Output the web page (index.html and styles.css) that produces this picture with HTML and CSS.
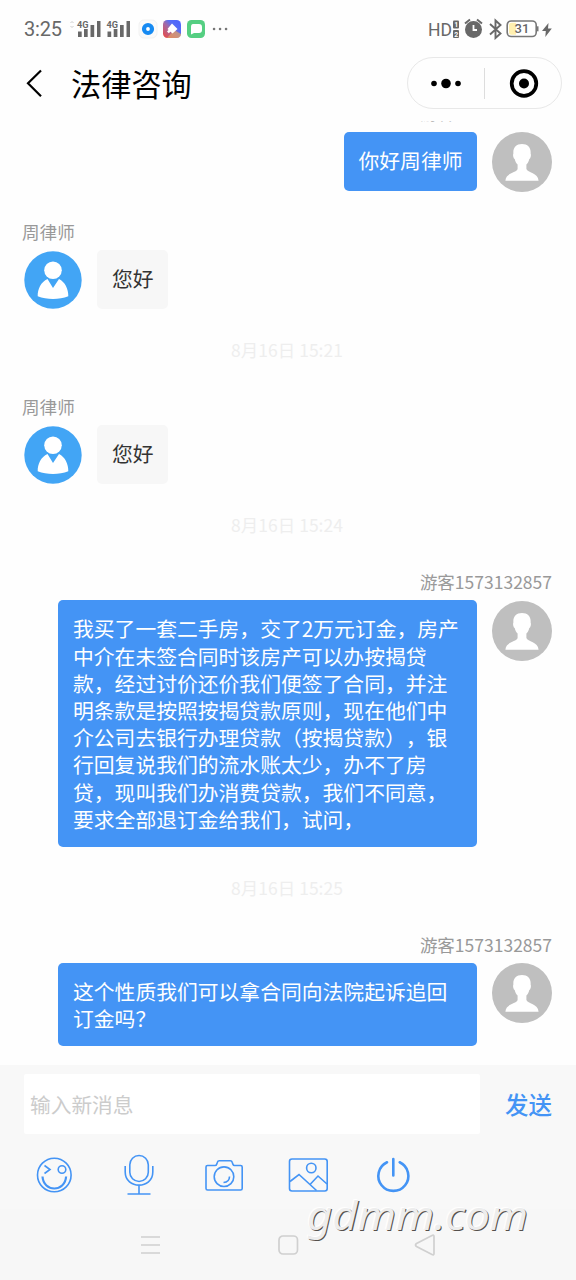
FILE: index.html
```html
<!DOCTYPE html>
<html lang="zh-CN">
<head>
<meta charset="utf-8">
<title>法律咨询</title>
<link rel="stylesheet" href="styles.css">
</head>
<body>
<svg class="defs" width="0" height="0">
  <symbol id="guest" viewBox="0 0 60 60">
    <circle cx="30" cy="30" r="30" fill="#bfbfbf"/>
    <path fill="#fff" d="M30 12C24 12 20.800 16 21.400 21.500C20.800 22 21 26 22.700 27C23.300 29.500 24.200 31.300 25.600 32.500V37C24.500 41 13.800 40.500 13.400 48.700H46.600C46.200 40.500 35.500 41 34.400 37V32.500C35.800 31.300 36.700 29.500 37.300 27C39 26 39.200 22 38.600 21.500C39.200 16 36 12 30 12Z"/>
  </symbol>
  <symbol id="lawyer" viewBox="0 0 58 58">
    <circle cx="29" cy="29" r="28.700" fill="#42a5f5"/>
    <circle cx="29" cy="19.300" r="8.800" fill="#fff"/>
    <path fill="#fff" d="M23.500 28 29 37l6-9C41 31 44.500 38 44.300 45.200c-9.300 3.600-21.300 3.600-30.600 0C13.500 38 17 31 23.500 28z"/>
  </symbol>
</svg>
<div class="phone">
  <header>
    <div class="status">
      <span class="clock">3:25</span>
      <svg class="signals" width="170" height="24" viewBox="0 0 170 24">
        <path d="M.500 7l1.500-1.500L3.500 7M.5 10l1.500 1.500L3.500 10" fill="none" stroke="#ccc"/>
        <g fill="#686868">
          <text class="net" x="7" y="11.500" textLength="11.500" lengthAdjust="spacingAndGlyphs">4G</text><text class="net" x="36.500" y="11.500" textLength="11.500" lengthAdjust="spacingAndGlyphs">4G</text>
          <path d="M8 15.500h3.700v5.500H8zM14 13h3.700v8H14zM20.500 9h3.700v12h-3.700zM27 5h3.500v16H27zM37.500 15.500h3.700v5.500h-3.700zM43.700 13h3.700v8h-3.700zM50 9h3.700v12H50zM56.500 5H60v16h-3.500z"/>
        </g>
        <rect x="69" y="4" width="18" height="18" rx="5" fill="#fafafa" stroke="#f2f2f2"/>
        <circle cx="78" cy="13" r="4" fill="#fff" stroke="#168af2" stroke-width="4.200"/>
        <defs><linearGradient id="g" x1="0" y1="1" x2="1" y2="0"><stop offset="0" stop-color="#f0483e"/><stop offset=".45" stop-color="#a36aa5"/><stop offset=".65" stop-color="#566ef5"/><stop offset="1" stop-color="#4b63ff"/></linearGradient></defs>
        <rect x="93" y="4" width="18" height="18" rx="4.500" fill="url(#g)"/>
        <path d="M97 22l7-8 7 4q0 4-4.500 4z" fill="#e9ad62" opacity=".6"/>
        <path d="M102 7.500l5.500 5.500-5 4.500-5-4.500z M97 15.500l2-2 1.800 1.800-2 2z" fill="#fff"/>
        <rect x="117" y="4" width="18" height="18" rx="4.500" fill="#55cf82"/>
        <path d="M123 8h6q3 0 3 3v3q0 3-3 3h-5l-3 1.500V11q0-3 2-3z" fill="#fff"/>
        <path d="M144 13h.1M150 13h.1M156 13h.1" stroke="#777" stroke-width="2.500" stroke-linecap="round"/>
      </svg>
      <svg class="system" width="128" height="24" viewBox="0 0 128 24">
        <g fill="#686868">
          <text class="hd" x="1" y="20" textLength="24" lengthAdjust="spacingAndGlyphs">HD</text>
          <rect x="26" y="4.500" width="6" height="8" rx="1"/><rect x="26" y="14" width="6" height="8" rx="1"/>
          <text class="sim" x="27.200" y="11.300">1</text><text class="sim" x="27.200" y="20.700">2</text>
          <circle cx="46.500" cy="13.500" r="8.500"/>
        </g>
        <path d="M46.500 9v5h3.500" fill="none" stroke="#fff" stroke-width="1.800"/>
        <path d="M38 7.500l5-4M55 7.500l-5-4" stroke="#686868" stroke-width="2"/>
        <path d="M63 8l10.500 9.500-5 4.500V4.500l5 4.500L63 18.500" fill="none" stroke="#686868" stroke-width="1.900"/>
        <rect x="80.200" y="5" width="29" height="15.500" rx="4" fill="#fff" stroke="#777" stroke-width="1.600"/>
        <path d="M84.500 6.800H89v12h-4.500q-2.500 0-2.500-2.500v-7q0-2.500 2.500-2.500z" fill="#fff0b0"/>
        <path d="M110.500 10.300v5" stroke="#777" stroke-width="2"/>
        <text class="charge" x="87.500" y="17.300">31</text>
        <path d="M121.500 7l-6.500 8h3.800l-.5 6 6.500-8.500H121z" fill="#686868"/>
      </svg>
    </div>
    <div class="nav">
      <svg width="20" height="32" viewBox="0 0 20 32"><path d="M19 3.500 6 16.200l13 13" fill="none" stroke="#000" stroke-width="2.200"/></svg>
      <h1>法律咨询</h1>
      <div class="capsule">
        <svg width="76" height="50" viewBox="0 0 76 50"><circle cx="26" cy="25.500" r="2.800"/><circle cx="38" cy="25.500" r="4.800"/><circle cx="50" cy="25.500" r="2.800"/></svg>
        <i></i>
        <svg width="76" height="50" viewBox="0 0 76 50"><circle cx="39" cy="25.500" r="12.300" fill="none" stroke="#000" stroke-width="3.700"/><circle cx="39" cy="25.500" r="5"/></svg>
      </div>
    </div>
  </header>

  <main>
    <section class="msg mine">
      <div class="name">游客1573132857</div>
      <div class="row"><div class="bubble">你好周律师</div><svg class="avatar"><use href="#guest"/></svg></div>
    </section>
    <section class="msg theirs">
      <div class="name">周律师</div>
      <div class="row"><svg class="avatar"><use href="#lawyer"/></svg><div class="bubble">您好</div></div>
    </section>
    <time>8月16日 15:21</time>
    <section class="msg theirs">
      <div class="name">周律师</div>
      <div class="row"><svg class="avatar"><use href="#lawyer"/></svg><div class="bubble">您好</div></div>
    </section>
    <time>8月16日 15:24</time>
    <section class="msg mine">
      <div class="name">游客1573132857</div>
      <div class="row"><div class="bubble wide">我买了一套二手房，交了2万元订金，房产<br>中介在未签合同时该房产可以办按揭贷<br>款，经过讨价还价我们便签了合同，并注<br>明条款是按照按揭贷款原则，现在他们中<br>介公司去银行办理贷款（按揭贷款），银<br>行回复说我们的流水账太少，办不了房<br>贷，现叫我们办消费贷款，我们不同意，<br>要求全部退订金给我们，试问，</div><svg class="avatar"><use href="#guest"/></svg></div>
    </section>
    <time>8月16日 15:25</time>
    <section class="msg mine">
      <div class="name">游客1573132857</div>
      <div class="row"><div class="bubble wide">这个性质我们可以拿合同向法院起诉追回<br>订金吗？</div><svg class="avatar"><use href="#guest"/></svg></div>
    </section>
  </main>

  <footer>
    <div class="compose"><div class="input">输入新消息</div><div class="send">发送</div></div>
    <div class="tools">
      <svg width="40" height="44" viewBox="0 0 40 44"><circle cx="20.300" cy="22" r="16.800"/><circle cx="28" cy="16.500" r="3.800"/><path d="M10.500 12.500l5.500 4-5.500 4"/><path d="M8.500 23.500c1 16 22.600 16 23.600 0" stroke-width="2.200"/></svg>
      <svg width="40" height="44" viewBox="0 0 40 44"><rect x="10.800" y="2.500" width="18.500" height="26" rx="9.250"/><path d="M6.200 13v6c0 17.500 27.600 17.500 27.600 0v-6M20 32v8.800M8.500 41h23"/></svg>
      <svg width="40" height="44" viewBox="0 0 40 44"><path d="M3.500 12.500h7.500q1.300 0 1.700-1.300l.6-1.800q.5-1.700 2-1.700h11q1.500 0 2 1.700l.6 1.800q.4 1.300 1.700 1.300h6q1.600 0 1.600 1.600v21.300q0 1.600-1.600 1.600h-33q-1.600 0-1.600-1.600V14.100q0-1.600 1.500-1.600z"/><circle cx="20" cy="23.700" r="9.800"/><path d="M25.500 23.500q0 5.500-6 6"/></svg>
      <svg width="40" height="44" viewBox="0 0 40 44"><rect x="1.500" y="6" width="37.700" height="32" rx="2.500"/><circle cx="23.300" cy="15" r="4.700"/><path d="M2 28.500 11 21.500 28.500 37.500M22.500 31l7.500-8 9 8"/></svg>
      <svg width="40" height="44" viewBox="0 0 40 44"><path d="M14 9.300a15 15 0 1 0 12.700 0M20.300 6v16.500" stroke-width="2.600" stroke-linecap="round"/></svg>
    </div>
    <div class="system-nav">
      <svg width="22" height="22" viewBox="0 0 22 22"><path d="M1 3h19M1 11h19M1 19h19"/></svg>
      <svg width="22" height="22" viewBox="0 0 22 22"><rect x="2" y="2" width="18.500" height="18" rx="4"/></svg>
      <svg width="22" height="22" viewBox="0 0 22 22"><path d="M2.500 9.500 18 1.500q2-1 2 1v17q0 2-2 1L2.500 12.500q-2-1.500 0-3z"/></svg>
    </div>
    <svg class="watermark" width="240" height="60" viewBox="0 0 240 60"><text x="11" y="40" textLength="221" lengthAdjust="spacingAndGlyphs">gdmm.com</text></svg>
  </footer>
</div>
</body>
</html>
```
FILE: styles.css
```css
* { box-sizing: border-box; }
body { margin: 0; background: #fff; font-family: "Noto Sans CJK SC", sans-serif; text-spacing-trim: space-all; }
.defs { position: absolute; }
.phone { width: 576px; height: 1280px; display: flex; flex-direction: column; background: #fefefe; }
svg { display: block; flex: none; }

header { height: 121px; flex: none; }
.status { height: 48px; padding: 16px 0 0 24px; display: flex; font-family: Roboto, sans-serif; color: #686868; }
.clock { width: 46px; font-size: 20px; line-height: 27px; letter-spacing: -0.2px; }
.system { margin-left: 187px; }
.net { font: bold 9px Roboto, sans-serif; }
.hd { font: 19px Roboto, sans-serif; }
.sim { font: bold 7px Roboto, sans-serif; fill: #fff; }
.charge { font: 500 13px Roboto, sans-serif; fill: #666; }
.nav { height: 70px; padding: 0 14px 0 22px; display: flex; align-items: center; }
.nav h1 { margin: 0 0 0 29px; font-size: 30.2px; line-height: 44px; font-weight: 400; color: #000; }
.capsule { width: 155px; height: 52px; margin-left: auto; display: flex; align-items: center; border: 1px solid #e8e8e8; border-radius: 26px; }
.capsule i { width: 1px; height: 31px; background: #ddd; }

main { height: 944px; flex: none; overflow: hidden; padding: 0 24px 0 22px; display: flex; flex-direction: column; }
.msg { flex: none; }
.msg:first-child { margin-top: -20px; }
.msg:first-child .name { margin-top: -1px; margin-bottom: 1px; color: #bbb; }
.msg.theirs:nth-child(2) { margin-top: 27px; }
.name { height: 31px; font-size: 17.6px; line-height: 26px; color: #999; }
.row { display: flex; align-items: flex-start; }
.mine .row { justify-content: flex-end; gap: 15px; }
.mine .name { text-align: right; font-size: 17.5px; }
.mine .avatar { width: 60px; height: 60px; margin: .4px .5px 0 -.5px; }
.theirs .avatar { width: 58px; height: 58px; margin: .9px 0 0 2px; }
.theirs .row { gap: 15px; height: 59px; }
.bubble { padding: 14.500px 14.500px 14px 15px; min-height: 59px; border-radius: 5px; font-size: 20.8px; line-height: 27.2px; white-space: nowrap; background: #4494f5; color: #fff; }
.bubble.wide { width: 419px; padding-top: 15px; padding-bottom: 13.600px; }
.theirs .bubble { background: #f7f7f7; color: #333; }
time { flex: none; margin: 28px 0 31px; font-size: 17.5px; line-height: 26px; text-align: center; color: #eee; }

footer { position: relative; height: 215px; flex: none; background: #f8f8f8; }
.compose { display: flex; padding: 9px 24px 0; }
.input { width: 456px; height: 60px; padding-left: 6px; background: #fff; border-radius: 2px; font-size: 20.7px; line-height: 60px; color: #ccc; }
.send { margin-left: auto; font-size: 23.500px; line-height: 60px; font-weight: 500; color: #4494f5; }
.tools { display: flex; gap: 44.800px; padding: 19px 0 0 34px; height: 75px; }
.tools svg { fill: none; stroke: #4494f5; stroke-width: 1.6; }
.system-nav { height: 71px; padding: 25px 0 0 140px; display: flex; gap: 115px; background: #f7f7f7; }
.system-nav svg { fill: none; stroke: #d0d0d0; stroke-width: 1.7; }
.watermark { position: absolute; left: 296px; top: 125px; overflow: visible; }
.watermark text { font: italic 40px "Noto Sans", sans-serif; fill: #ededed; text-shadow: 1px 1px 0.5px #55504c, -1px -1px 1px #fff; }
```
